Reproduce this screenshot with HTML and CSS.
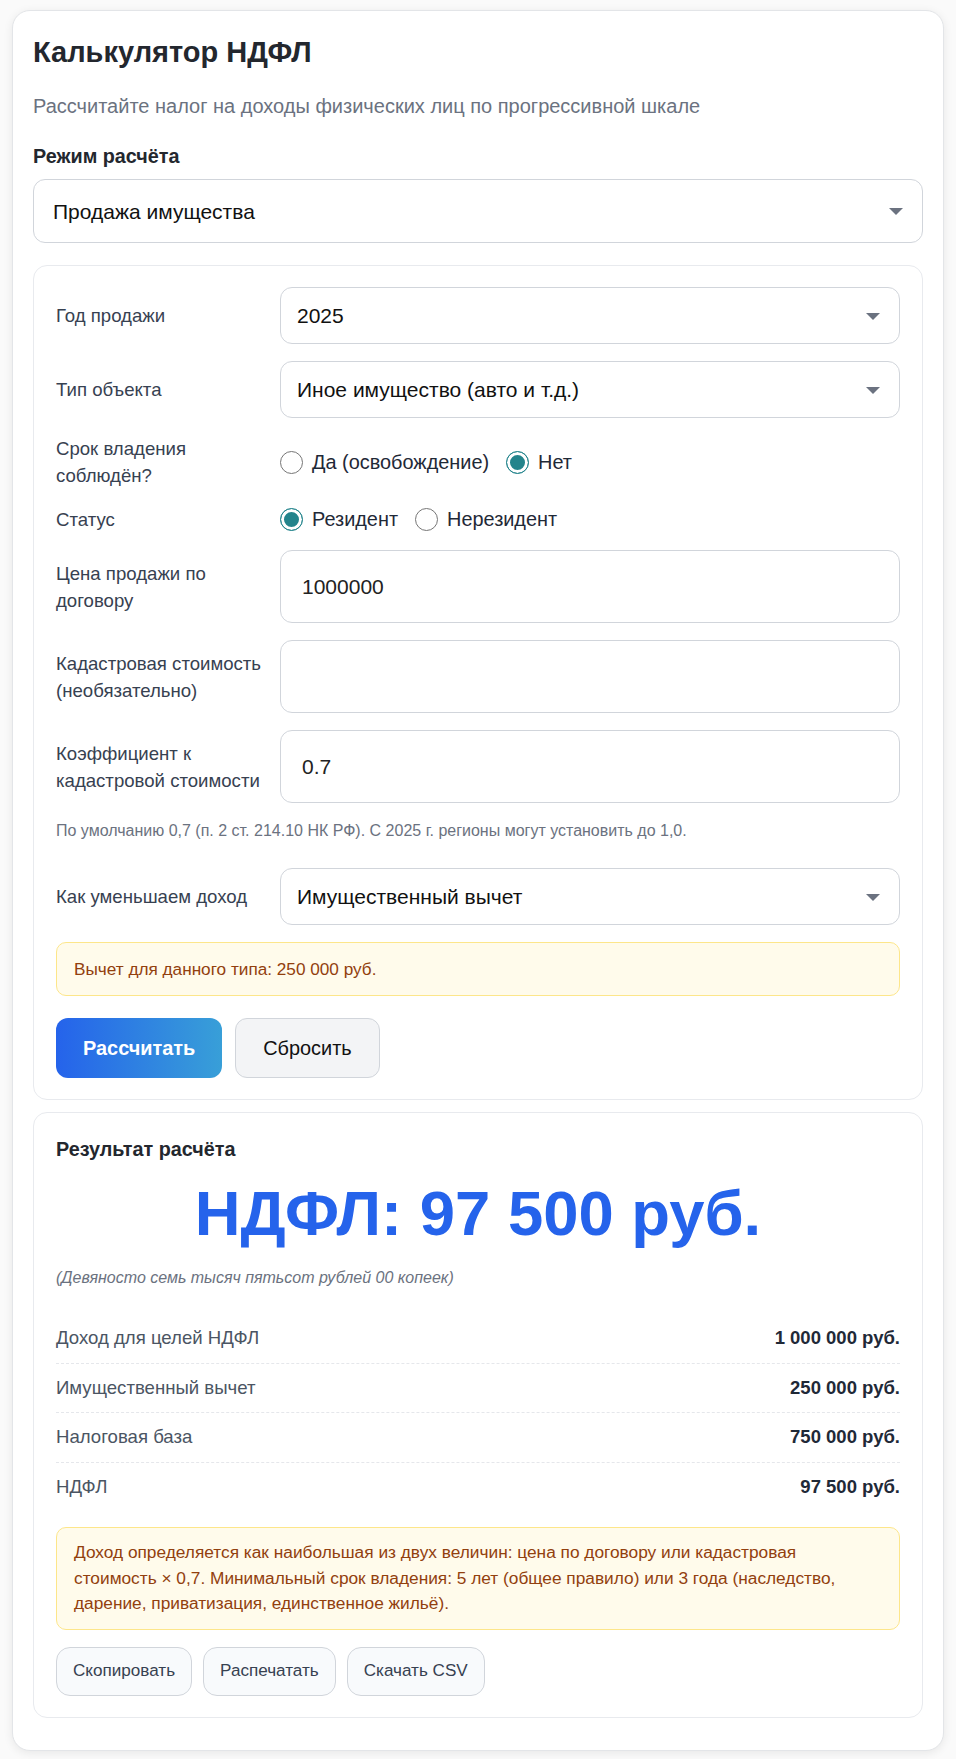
FILE: index.html
```html
<!DOCTYPE html>
<html lang="ru">
<head>
<meta charset="utf-8">
<title>Калькулятор НДФЛ</title>
<link rel="stylesheet" href="styles.css">
</head>
<body>
<div class="card">
  <h1 class="title">Калькулятор НДФЛ</h1>
  <p class="subtitle">Рассчитайте налог на доходы физических лиц по прогрессивной шкале</p>
  <div class="mode-label">Режим расчёта</div>
  <div class="select-wrap">
    <select class="select select-lg"><option>Продажа имущества</option></select>
  </div>

  <section class="panel form">
    <div class="row">
      <span class="label">Год продажи</span>
      <div class="select-wrap"><select class="select"><option>2025</option></select></div>
    </div>
    <div class="row">
      <span class="label">Тип объекта</span>
      <div class="select-wrap"><select class="select"><option>Иное имущество (авто и т.д.)</option></select></div>
    </div>
    <div class="row">
      <span class="label">Срок владения соблюдён?</span>
      <div class="radios">
        <label class="radio"><span class="dot"></span>Да (освобождение)</label>
        <label class="radio"><span class="dot checked"></span>Нет</label>
      </div>
    </div>
    <div class="row">
      <span class="label">Статус</span>
      <div class="radios">
        <label class="radio"><span class="dot checked"></span>Резидент</label>
        <label class="radio"><span class="dot"></span>Нерезидент</label>
      </div>
    </div>
    <div class="row">
      <span class="label">Цена продажи по договору</span>
      <input class="input" type="text" value="1000000">
    </div>
    <div class="row">
      <span class="label">Кадастровая стоимость (необязательно)</span>
      <input class="input" type="text" value="">
    </div>
    <div class="row">
      <span class="label">Коэффициент к кадастровой стоимости</span>
      <input class="input" type="text" value="0.7">
    </div>
    <p class="hint">По умолчанию 0,7 (п. 2 ст. 214.10 НК РФ). С 2025 г. регионы могут установить до 1,0.</p>
    <div class="row">
      <span class="label">Как уменьшаем доход</span>
      <div class="select-wrap"><select class="select"><option>Имущественный вычет</option></select></div>
    </div>
    <div class="alert">Вычет для данного типа: 250 000 руб.</div>
    <div class="actions">
      <button class="btn btn-primary">Рассчитать</button>
      <button class="btn btn-secondary">Сбросить</button>
    </div>
  </section>

  <section class="panel result">
    <h2 class="result-title">Результат расчёта</h2>
    <div class="big">НДФЛ: 97 500 руб.</div>
    <p class="words">(Девяносто семь тысяч пятьсот рублей 00 копеек)</p>
    <div class="kv-list">
      <div class="kv"><span class="k">Доход для целей НДФЛ</span><span class="v">1 000 000 руб.</span></div>
      <div class="kv"><span class="k">Имущественный вычет</span><span class="v">250 000 руб.</span></div>
      <div class="kv"><span class="k">Налоговая база</span><span class="v">750 000 руб.</span></div>
      <div class="kv"><span class="k">НДФЛ</span><span class="v">97 500 руб.</span></div>
    </div>
    <div class="note">Доход определяется как наибольшая из двух величин: цена по договору или кадастровая стоимость × 0,7. Минимальный срок владения: 5 лет (общее правило) или 3 года (наследство, дарение, приватизация, единственное жильё).</div>
    <div class="tools">
      <button class="btn-small">Скопировать</button>
      <button class="btn-small">Распечатать</button>
      <button class="btn-small">Скачать CSV</button>
    </div>
  </section>
</div>
</body>
</html>
```
FILE: styles.css
```css
* { box-sizing: border-box; }

html, body { margin: 0; padding: 0; }

body {
  background: #fafafa;
  font-family: "Liberation Sans", Arial, sans-serif;
  color: #1f2937;
  padding: 10px 12px 8px;
}

.card {
  background: #fff;
  border: 1px solid #e3e5e8;
  border-radius: 18px;
  box-shadow: 0 2px 10px rgba(0, 0, 0, 0.08);
  padding: 24px 20px 32px;
}

.title {
  margin: 0 0 23px;
  font-size: 29px;
  line-height: 34px;
  font-weight: 700;
  color: #23272e;
}

.subtitle {
  margin: 0 0 24px;
  font-size: 20px;
  line-height: 28px;
  color: #6b7280;
}

.mode-label {
  font-size: 19.8px;
  line-height: 24px;
  font-weight: 700;
  color: #23272e;
  margin-bottom: 11px;
}

.select-wrap {
  position: relative;
  flex: 1;
}

.select-wrap::after {
  content: "";
  position: absolute;
  right: 20px;
  top: 50%;
  margin-top: -3px;
  border-left: 7px solid transparent;
  border-right: 7px solid transparent;
  border-top: 7px solid #6b7280;
  pointer-events: none;
}

.select {
  -webkit-appearance: none;
  appearance: none;
  display: block;
  width: 100%;
  height: 57px;
  border: 1px solid #d1d5db;
  border-radius: 12px;
  background: #fff;
  font-family: "Liberation Sans", Arial, sans-serif;
  font-size: 21px;
  color: #111;
  padding: 0 40px 0 16px;
}

.select-lg {
  height: 64px;
  padding-left: 19px;
}

.panel {
  border: 1px solid #e8eaee;
  border-radius: 14px;
  background: #fff;
}

.form {
  margin-top: 22px;
  padding: 21px 22px 21px;
  display: flex;
  flex-direction: column;
  gap: 17px;
}

.row {
  display: grid;
  grid-template-columns: 210px 1fr;
  column-gap: 14px;
  align-items: center;
}

.label {
  font-size: 18.6px;
  line-height: 27px;
  color: #374151;
}

.radios {
  display: flex;
  align-items: center;
  gap: 17px;
}

.radio {
  display: flex;
  align-items: center;
  gap: 9px;
  font-size: 19.9px;
  line-height: 27px;
  color: #1f2937;
}

.dot {
  width: 23px;
  height: 23px;
  border-radius: 50%;
  border: 1.5px solid #767676;
  background: #fff;
  flex: none;
}

.dot.checked {
  border-color: #23848c;
  background: #23848c;
  box-shadow: inset 0 0 0 3px #fff;
}

.input {
  display: block;
  width: 100%;
  height: 73px;
  border: 1px solid #d1d5db;
  border-radius: 12px;
  background: #fff;
  font-family: "Liberation Sans", Arial, sans-serif;
  font-size: 21px;
  color: #222;
  padding: 0 21px;
  outline: none;
}

.hint {
  margin: 0 0 10px;
  font-size: 16px;
  line-height: 21px;
  color: #6b7280;
}

.alert {
  border: 1px solid #fde68a;
  background: #fffbeb;
  border-radius: 10px;
  padding: 15px 17px;
  font-size: 17.2px;
  line-height: 22px;
  color: #92400e;
}

.actions {
  margin-top: 5px;
  display: flex;
  gap: 13px;
}

.btn {
  height: 60px;
  border-radius: 12px;
  font-family: "Liberation Sans", Arial, sans-serif;
  font-size: 19.9px;
  padding: 0 27px;
  cursor: pointer;
}

.btn-primary {
  border: none;
  color: #fff;
  font-weight: 700;
  background: linear-gradient(90deg, #2563eb 0%, #389fd8 100%);
}

.btn-secondary {
  border: 1px solid #d1d5db;
  background: #f3f4f6;
  color: #111;
}

.result {
  margin-top: 12px;
  padding: 24px 22px 21px;
}

.result-title {
  margin: 0;
  font-size: 19.8px;
  line-height: 24px;
  font-weight: 700;
  color: #23272e;
}

.big {
  margin-top: 14px;
  text-align: center;
  font-size: 63.4px;
  line-height: 76px;
  font-weight: 700;
  color: #2563eb;
}

.words {
  margin: 15.5px 0 0;
  font-size: 16px;
  line-height: 22px;
  font-style: italic;
  color: #6b7280;
}

.kv-list {
  margin-top: 25.5px;
}

.kv {
  display: flex;
  justify-content: space-between;
  align-items: center;
  padding: 12px 0;
  line-height: 24.5px;
  font-size: 18.6px;
  border-bottom: 1px dashed #e5e7eb;
}

.kv:last-child {
  border-bottom: none;
}

.k {
  color: #4b5563;
}

.v {
  font-size: 18.5px;
  font-weight: 700;
  color: #1f2937;
}

.note {
  margin-top: 16px;
  border: 1px solid #fde68a;
  background: #fffbeb;
  border-radius: 10px;
  padding: 12px 17px;
  font-size: 17.3px;
  line-height: 25.5px;
  color: #92400e;
}

.tools {
  margin-top: 17px;
  display: flex;
  gap: 11px;
}

.btn-small {
  height: 49px;
  padding: 0 16px;
  border: 1px solid #d1d5db;
  border-radius: 14px;
  background: #f8fafc;
  font-family: "Liberation Sans", Arial, sans-serif;
  font-size: 17.1px;
  color: #374151;
  cursor: pointer;
}
```
